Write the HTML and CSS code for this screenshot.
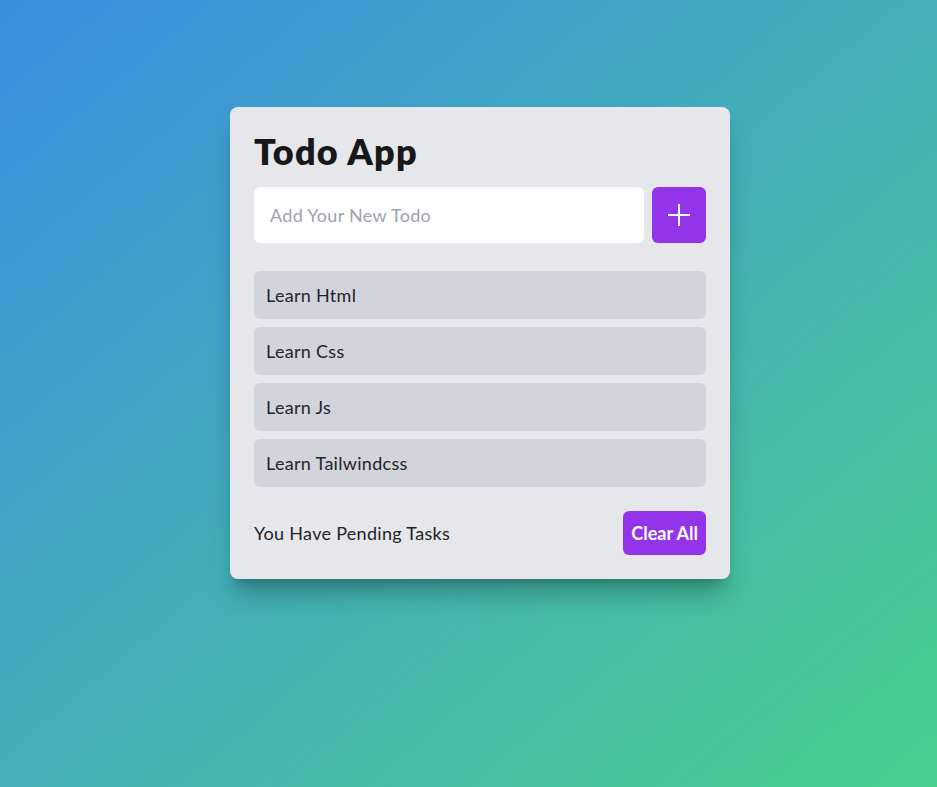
FILE: index.html
```html
<!DOCTYPE html>
<html lang="en">
<head>
<meta charset="utf-8">
<title>Todo App</title>
<link rel="stylesheet" href="styles.css">
</head>
<body>
<main class="page">
  <section class="card">
    <h1 class="title">Todo App</h1>
    <form class="add-row">
      <input class="add-input" type="text" placeholder="Add Your New Todo">
      <button class="add-btn" type="button" aria-label="Add">
        <svg width="24" height="24" viewBox="0 0 24 24" fill="none" stroke="#fff" stroke-width="2"><path d="M12 1v22M1 12h22"/></svg>
      </button>
    </form>
    <ul class="todo-list">
      <li class="todo">Learn Html</li>
      <li class="todo">Learn Css</li>
      <li class="todo">Learn Js</li>
      <li class="todo">Learn Tailwindcss</li>
    </ul>
    <div class="footer">
      <span class="pending">You Have Pending Tasks</span>
      <button class="clear-btn" type="button">Clear All</button>
    </div>
  </section>
</main>
</body>
</html>
```
FILE: styles.css
```css
* { box-sizing: border-box; }
html, body { margin: 0; height: 100%; }
body {
  font-family: "Lato", "Liberation Sans", sans-serif;
  background: linear-gradient(to bottom right, #3b8ee1, #49d08d);
  min-height: 787px;
  color: #1f2329;
}
.page {
  padding: 107px 0 0 230px;
}
.card {
  width: 500px;
  background: #e5e7eb;
  border-radius: 8px;
  padding: 24px;
  box-shadow: 0 20px 25px -5px rgba(0,0,0,0.25), 0 8px 10px -6px rgba(0,0,0,0.2);
}
.title {
  margin: 0 0 16px;
  font-size: 36px;
  line-height: 40px;
  font-weight: 800;
  letter-spacing: 1.2px;
  color: #18181b;
}
.add-row {
  display: flex;
  gap: 8px;
  margin: 0 0 28px;
}
.add-input {
  flex: 1;
  height: 56px;
  border: none;
  border-radius: 6px;
  background: #fff;
  padding: 0 16px;
  font: inherit;
  font-size: 18px;
  letter-spacing: 0.3px;
  color: #1f2329;
  outline: none;
}
.add-input::placeholder { color: #9ca3af; }
.add-btn {
  width: 54px;
  height: 56px;
  border: none;
  border-radius: 6px;
  background: #9333ea;
  display: flex;
  align-items: center;
  justify-content: center;
  padding: 0;
}
.todo-list {
  list-style: none;
  margin: 0;
  padding: 0;
  display: flex;
  flex-direction: column;
  gap: 8px;
}
.todo {
  background: #d1d5db;
  border-radius: 6px;
  padding: 10px 12px;
  font-size: 18px;
  line-height: 28px;
  letter-spacing: 0.3px;
  color: #1f2329;
}
.footer {
  display: flex;
  align-items: center;
  justify-content: space-between;
  margin-top: 24px;
}
.pending {
  font-size: 18px;
  line-height: 28px;
  letter-spacing: 0.3px;
}
.clear-btn {
  border: none;
  background: #9333ea;
  color: #fff;
  font: inherit;
  font-size: 18px;
  font-weight: 700;
  line-height: 28px;
  padding: 8px 8px;
  border-radius: 6px;
}
```
